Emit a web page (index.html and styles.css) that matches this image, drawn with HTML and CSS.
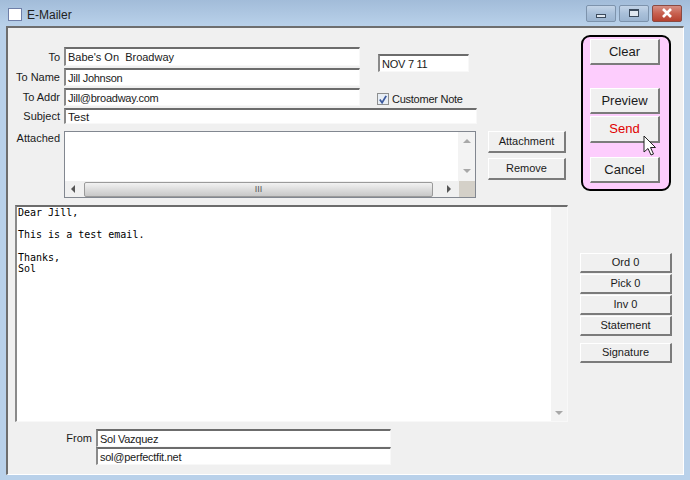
FILE: index.html
```html
<!DOCTYPE html>
<html lang="en">
<head>
    <meta charset="UTF-8">
    <title>E-Mailer</title>
    <link rel="stylesheet" href="styles.css">
</head>
<body>
    <div class="window">
        <div class="titlebar">
            <span class="app-icon"></span>
            <span class="title">E-Mailer</span>
            <div class="caption-buttons">
                <span class="cap-btn cap-min"><i class="min-glyph"></i></span>
                <span class="cap-btn cap-max"><i class="max-glyph"></i></span>
                <span class="cap-btn cap-close">
                    <svg width="14" height="10" viewBox="0 0 14 10"><path d="M3 1 L11 9 M11 1 L3 9" stroke="#fff" stroke-width="2.6" fill="none"/></svg>
                </span>
            </div>
        </div>
        <div class="client">
            <div class="main-col">
                <div class="upper">
                    <div class="upper-rows">
                        <div class="row"><label class="lbl">To</label><div class="input to-input w296 tall">Babe's On&nbsp; Broadway</div></div>
                        <div class="row"><label class="lbl">To Name</label><div class="input narrow w296">Jill Johnson</div></div>
                        <div class="row"><label class="lbl">To Addr</label><div class="input narrow w296">Jill@broadway.com</div></div>
                    </div>
                    <div class="upper-side">
                        <div class="input narrow date">NOV 7 11</div>
                        <div class="check-row">
                            <span class="checkbox">
                                <svg width="11" height="11" viewBox="0 0 11 11"><path d="M2 5.5 L4.5 9 L9 1.5" stroke="#3d5a9e" stroke-width="2" fill="none"/></svg>
                            </span>
                            <span>Customer Note</span>
                        </div>
                    </div>
                </div>
                <div class="row subject-row"><label class="lbl">Subject</label><div class="input wide w413 subject">Test</div></div>
                <div class="attach-row">
                    <label class="lbl attach-lbl">Attached</label>
                    <div class="attach-box">
                        <div class="attach-top">
                            <div class="attach-list"></div>
                            <div class="vscroll">
                                <i class="arrow-up"></i>
                                <i class="arrow-down"></i>
                            </div>
                        </div>
                        <div class="hscroll">
                            <i class="arrow-left"></i>
                            <div class="hthumb">III</div>
                            <i class="arrow-right"></i>
                            <span class="scroll-corner"></span>
                        </div>
                    </div>
                    <div class="attach-buttons">
                        <button class="btn attach-btn">Attachment</button>
                        <button class="btn remove-btn">Remove</button>
                    </div>
                </div>
                <div class="message">
                    <pre class="message-text">Dear Jill,

This is a test email.

Thanks,
Sol</pre>
                    <div class="vscroll message-scroll">
                        <i class="arrow-down"></i>
                    </div>
                </div>
                <div class="from-block">
                    <div class="row from-row"><label class="lbl from-lbl">From</label><div class="input narrow w295">Sol Vazquez</div></div>
                    <div class="row from-row"><span class="from-lbl"></span><div class="input narrow w295">sol@perfectfit.net</div></div>
                </div>
            </div>
            <div class="side-col">
                <div class="pink-panel">
                    <button class="btn big clear-btn">Clear</button>
                    <button class="btn big preview-btn">Preview</button>
                    <button class="btn big send-btn">Send</button>
                    <button class="btn big cancel-btn">Cancel</button>
                </div>
                <div class="doc-buttons">
                    <button class="btn small">Ord 0</button>
                    <button class="btn small">Pick 0</button>
                    <button class="btn small">Inv 0</button>
                    <button class="btn small">Statement</button>
                    <button class="btn small signature-btn">Signature</button>
                </div>
            </div>
        </div>
        <svg class="cursor" width="14" height="22" viewBox="0 0 14 22"><path d="M1 1 L1 17 L5 13.5 L8 20 L10.5 19 L7.5 12.5 L12.5 12.5 Z" fill="#fff" stroke="#222" stroke-width="1"/></svg>
    </div>
</body>
</html>
```

FILE: styles.css
```css
* {
    box-sizing: border-box;
}
html, body {
    margin: 0;
    height: 100%;
    overflow: hidden;
}
body {
    font-family: "Liberation Sans", Arial, sans-serif;
    font-size: 11px;
    color: #1a1a1a;
}
.window {
    position: relative;
    width: 690px;
    height: 480px;
    padding: 0 6px 5px 6px;
    background: linear-gradient(180deg, #a2bcd9 0, #b9d1ea 26px);
    display: flex;
    flex-direction: column;
}
.titlebar {
    height: 26px;
    flex: none;
    display: flex;
    align-items: center;
    padding: 3px 0 0 2px;
}
.app-icon {
    width: 14px;
    height: 13px;
    background: #fff;
    border: 1px solid #6f7fa8;
    margin-right: 5px;
}
.title {
    font-size: 12px;
    color: #222;
}
.caption-buttons {
    margin-left: auto;
    margin-right: 2px;
    margin-top: -3px;
    display: flex;
    gap: 3px;
}
.cap-btn {
    width: 30px;
    height: 17px;
    border: 1px solid #7d93ac;
    border-radius: 2px;
    display: flex;
    align-items: center;
    justify-content: center;
    background: linear-gradient(180deg, #c3d4e7 0, #a9c0da 50%, #9bb4d0 100%);
}
.cap-close {
    border-color: #8a4a42;
    background: linear-gradient(180deg, #d58f84 0, #c8604f 50%, #b5412f 100%);
}
.min-glyph {
    width: 10px;
    height: 4px;
    margin-top: 5px;
    border: 1px solid #3b4a5c;
    background: #dfe7f0;
}
.max-glyph {
    width: 10px;
    height: 8px;
    border: 1px solid #3b4a5c;
    border-top-width: 2px;
    background: #dfe7f0;
}
.client {
    flex: 1;
    display: flex;
    background: #f0f0f0;
    border-style: solid;
    border-width: 2px 1px 1px 2px;
    border-color: #6e6e6e #fff #fff #6e6e6e;
    padding: 0 0 0 7px;
}
.main-col {
    width: 553px;
    padding-top: 19px;
    display: flex;
    flex-direction: column;
}
.upper {
    display: flex;
}
.upper-rows {
    display: flex;
    flex-direction: column;
    gap: 2px;
}
.upper-side {
    margin-left: 18px;
    padding-top: 7px;
}
.row {
    display: flex;
    align-items: center;
}
.lbl {
    width: 45px;
    margin-right: 4px;
    text-align: right;
    flex: none;
    white-space: nowrap;
}
.input {
    height: 18px;
    background: #fff;
    border: 1px solid #f8f8f8;
    border-top: 2px solid #6c6c6c;
    border-left: 2px solid #8a8a8a;
    padding-left: 2px;
    line-height: 16px;
    white-space: nowrap;
}
.narrow {
    font-size: 11px;
    letter-spacing: -0.25px;
}
.to-input {
    font-size: 11px;
}
.wide {
    font-size: 11.5px;
}
.tall {
    height: 19px;
}
.w296 {
    width: 296px;
}
.w295 {
    width: 295px;
}
.w413 {
    width: 413px;
}
.subject {
    height: 16px;
    line-height: 15px;
}
.date {
    width: 91px;
}
.check-row {
    display: flex;
    align-items: center;
    gap: 3px;
    margin-top: 21px;
    margin-left: -1px;
    letter-spacing: -0.25px;
}
.checkbox {
    width: 12px;
    height: 12px;
    border: 1px solid #8e8f8f;
    background: #e8eef5;
    display: flex;
    align-items: center;
    justify-content: center;
}
.subject-row {
    margin-top: 2px;
}
.attach-row {
    display: flex;
    margin-top: 7px;
}
.attach-lbl {
    padding-top: 1px;
}
.attach-box {
    width: 412px;
    height: 67px;
    border: 1px solid #828790;
    background: #fff;
    display: flex;
    flex-direction: column;
}
.attach-top {
    flex: 1;
    display: flex;
}
.attach-list {
    flex: 1;
}
.vscroll {
    width: 17px;
    background: #f3f3f3;
    display: flex;
    flex-direction: column;
    justify-content: space-between;
    align-items: center;
    padding: 7px 0 8px;
}
.hscroll {
    height: 16px;
    flex: none;
    display: flex;
    align-items: center;
    background: #f0f0f0;
}
.arrow-up, .arrow-down, .arrow-left, .arrow-right {
    width: 0;
    height: 0;
    border-style: solid;
    border-color: transparent;
    display: block;
}
.arrow-up {
    border-width: 0 4px 4px;
    border-bottom-color: #a8a8a8;
}
.arrow-down {
    border-width: 4px 4px 0;
    border-top-color: #a8a8a8;
}
.arrow-left {
    border-width: 4px 4px 4px 0;
    border-right-color: #555;
    margin: 0 9px 0 6px;
}
.arrow-right {
    border-width: 4px 0 4px 4px;
    border-left-color: #555;
    margin: 0 8px 0 14px;
}
.hthumb {
    width: 349px;
    height: 15px;
    border: 1px solid #9a9a9a;
    border-radius: 2px;
    background: linear-gradient(180deg, #f2f2f2 0, #dcdcdc 50%, #c8c8c8 100%);
    text-align: center;
    font-size: 9px;
    line-height: 13px;
    color: #555;
}
.scroll-corner {
    flex: 1;
    height: 100%;
    background: #d4d0c8;
}
.attach-buttons {
    margin-left: 12px;
    display: flex;
    flex-direction: column;
    gap: 5px;
}
.btn {
    display: block;
    padding: 0 0 2px;
    background: #f0f0f0;
    border: 1px solid #fff;
    border-right: 2px solid #7b7b7b;
    border-bottom: 2px solid #7b7b7b;
    font-family: "Liberation Sans", Arial, sans-serif;
    font-size: 11px;
    color: #1a1a1a;
    text-align: center;
}
.attach-btn, .remove-btn {
    width: 78px;
    height: 22px;
}
.message {
    width: 553px;
    height: 217px;
    margin-top: 7px;
    display: flex;
    background: #fff;
    border: 1px solid #f8f8f8;
    border-top: 2px solid #6c6c6c;
    border-left: 2px solid #8a8a8a;
}
.message-text {
    flex: 1;
    margin: 0;
    padding: 0 0 0 1px;
    font-family: "DejaVu Sans Mono", monospace;
    font-size: 10px;
    line-height: 11.2px;
    color: #000;
}
.message-scroll {
    justify-content: flex-end;
    padding-bottom: 6px;
    width: 16px;
}
.from-block {
    margin-top: 7px;
    display: flex;
    flex-direction: column;
}
.from-lbl {
    width: 77px;
    margin-right: 4px;
    padding-bottom: 1px;
    flex: none;
}
.side-col {
    width: 92px;
    margin-left: 12px;
    display: flex;
    flex-direction: column;
}
.pink-panel {
    width: 90px;
    height: 156px;
    margin-top: 7px;
    margin-left: 1px;
    padding: 2px 0 0 7px;
    background: #fdcdfd;
    border: 2px solid #000;
    border-radius: 9px;
    display: flex;
    flex-direction: column;
}
.big {
    width: 70px;
    height: 26px;
    flex: none;
    padding: 0;
    font-size: 13px;
}
.preview-btn {
    margin-top: 23px;
}
.send-btn {
    margin-top: 2px;
    height: 27px;
    padding-bottom: 2px;
    color: #e00000;
}
.cancel-btn {
    margin-top: 14px;
}
.doc-buttons {
    margin-top: 62px;
    display: flex;
    flex-direction: column;
    gap: 1px;
}
.small {
    width: 92px;
    height: 20px;
}
.signature-btn {
    margin-top: 6px;
}
.cursor {
    position: absolute;
    left: 643px;
    top: 135px;
}
```
